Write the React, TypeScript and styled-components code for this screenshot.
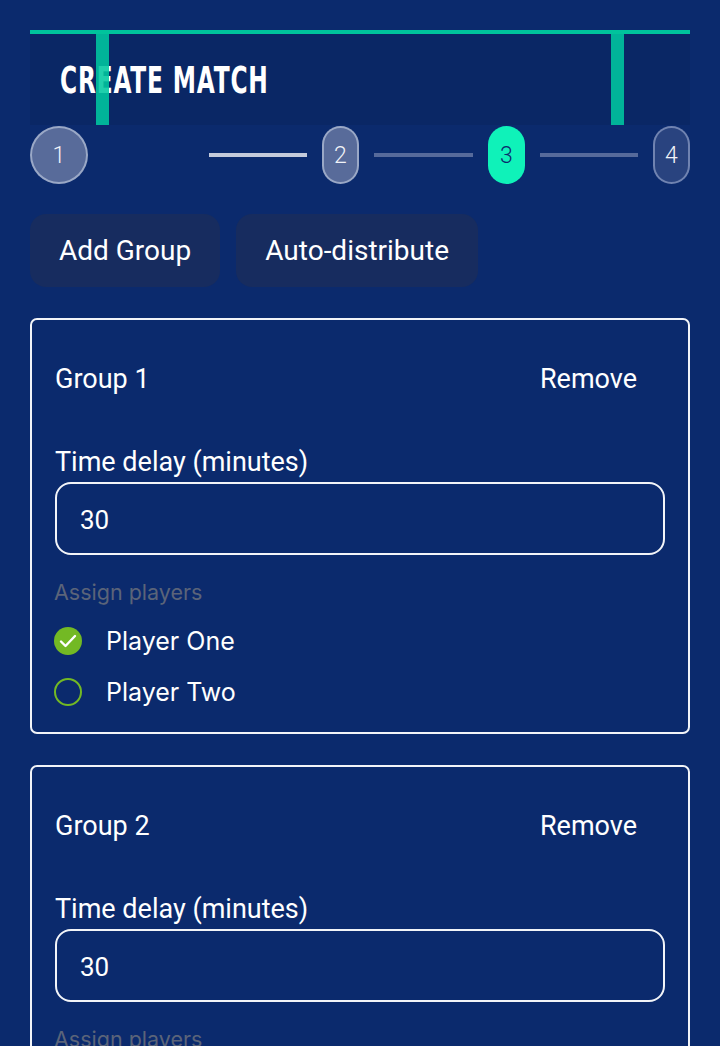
import React from "react";
import styled, { createGlobalStyle } from "styled-components";

const Global = createGlobalStyle`
  html, body { margin: 0; padding: 0; background: #0b2a6d; }
  body { font-family: Roboto, "Noto Sans", sans-serif; color: #fff; }
  * { box-sizing: border-box; }
`;

const Page = styled.div`
  padding: 30px 30px 0;
  min-height: 1046px;
  display: flex;
  flex-direction: column;
`;

const Header = styled.div`
  position: relative;
  height: 95px;
  background: #0a2765;
  border-top: 4px solid #00c39c;
  display: flex;
  align-items: center;
  padding-left: 30px;
`;

const Title = styled.h1`
  margin: 0;
  font-family: "DejaVu Sans Condensed", "DejaVu Sans", sans-serif;
  font-weight: 700;
  font-size: 37px;
  letter-spacing: 1.2px;
  color: #fff;
  white-space: nowrap;
  transform: scaleX(0.7);
  transform-origin: left center;
  padding-top: 2px;
`;

const Bar = styled.div<{ $left: number }>`
  position: absolute;
  top: 0;
  bottom: 0;
  left: ${(p) => p.$left}px;
  width: 13px;
  background: rgba(0, 200, 160, 0.88);
`;

const Stepper = styled.div`
  display: flex;
  align-items: center;
  height: 58px;
  margin-top: 1px;
`;

const FirstSlot = styled.div`
  width: 180px;
  display: flex;
  align-items: center;
`;

type Kind = "done" | "active" | "todo";

const Step = styled.div<{ $kind: Kind; $round?: boolean }>`
  width: ${(p) => (p.$round ? 58 : 37)}px;
  height: 58px;
  border-radius: 29px;
  flex: none;
  display: flex;
  align-items: center;
  justify-content: center;
  font-family: Roboto, sans-serif;
  font-weight: 300;
  font-size: 23px;
  background: ${(p) =>
    p.$kind === "active" ? "#0ff2b9" : p.$kind === "done" ? "#586b9a" : "#29437f"};
  border: ${(p) =>
    p.$kind === "active"
      ? "none"
      : p.$kind === "done"
      ? "2px solid rgba(210,218,235,0.55)"
      : "2px solid rgba(160,175,210,0.6)"};
  color: ${(p) => (p.$kind === "active" ? "#0b2a6d" : "#f1f3f8")};
`;

const Line = styled.div<{ $bright?: boolean; $w: number }>`
  width: ${(p) => p.$w}px;
  height: 4px;
  flex: none;
  background: ${(p) => (p.$bright ? "#c4cbdc" : "#566a9b")};
  margin: 0 15px;
`;

const FirstLine = styled(Line)`
  margin-left: 0;
`;

const Actions = styled.div`
  display: flex;
  gap: 16px;
  margin-top: 30px;
`;

const ActionButton = styled.button`
  height: 73px;
  padding: 0 29px;
  border: none;
  border-radius: 16px;
  background: #172c5f;
  color: #fff;
  font-family: Roboto, sans-serif;
  font-size: 28px;
  font-weight: 400;
`;

const Card = styled.div`
  margin-top: 31px;
  border: 2px solid #f2f4f8;
  border-radius: 7px;
  padding: 24px 23px 20px 22px;
  display: flex;
  flex-direction: column;
`;

const CardHead = styled.div`
  height: 70px;
  display: flex;
  align-items: center;
  justify-content: space-between;
  padding-left: 1px;
`;

const GroupName = styled.div`
  font-family: Roboto, sans-serif;
  font-size: 27px;
`;

const RemoveButton = styled.button`
  background: none;
  border: none;
  color: #fff;
  font-family: Roboto, sans-serif;
  font-size: 27px;
  padding: 0 28px 0 0;
`;

const FieldLabel = styled.label`
  margin-top: 32px;
  line-height: 32px;
  padding-left: 1px;
  font-family: Roboto, sans-serif;
  font-size: 27px;
`;

const Input = styled.input`
  margin-top: 4px;
  margin-left: 1px;
  height: 73px;
  width: calc(100% - 1px);
  border: 2px solid #f2f4f8;
  border-radius: 16px;
  background: transparent;
  color: #fff;
  font-family: Roboto, sans-serif;
  font-size: 26px;
  padding: 2px 0 0 23px;
  outline: none;
`;

const AssignLabel = styled.div`
  margin-top: 23px;
  line-height: 28px;
  font-family: Inter, sans-serif;
  font-size: 21.5px;
  color: #5b6479;
`;

const PlayerList = styled.div`
  margin-top: 15px;
  display: flex;
  flex-direction: column;
  gap: 11px;
`;

const PlayerRow = styled.div`
  height: 40px;
  display: flex;
  align-items: center;
  gap: 24px;
`;

const Check = styled.div<{ $on: boolean }>`
  width: 28px;
  height: 28px;
  border-radius: 50%;
  flex: none;
  display: flex;
  align-items: center;
  justify-content: center;
  background: ${(p) => (p.$on ? "#73b924" : "transparent")};
  border: ${(p) => (p.$on ? "none" : "2px solid #73b924")};
`;

const PlayerName = styled.span`
  font-family: Inter, sans-serif;
  font-size: 25px;
  color: #fff;
`;

const players = ["Player One", "Player Two"];

function GroupCard({ n, selected }: { n: number; selected: string[] }) {
  return (
    <Card>
      <CardHead>
        <GroupName>Group {n}</GroupName>
        <RemoveButton>Remove</RemoveButton>
      </CardHead>
      <FieldLabel>Time delay (minutes)</FieldLabel>
      <Input defaultValue="30" />
      <AssignLabel>Assign players</AssignLabel>
      <PlayerList>
        {players.map((p) => {
          const on = selected.includes(p);
          return (
            <PlayerRow key={p}>
              <Check $on={on}>
                {on && (
                  <svg width="18" height="14" viewBox="0 0 18 14">
                    <path d="M2 7.5 L6.5 12 L16 2" fill="none" stroke="#fff" strokeWidth="2.4" strokeLinecap="round" strokeLinejoin="round" />
                  </svg>
                )}
              </Check>
              <PlayerName>{p}</PlayerName>
            </PlayerRow>
          );
        })}
      </PlayerList>
    </Card>
  );
}

export default function App() {
  return (
    <>
      <Global />
      <Page>
        <Header>
          <Title>CREATE MATCH</Title>
          <Bar $left={66} />
          <Bar $left={581} />
        </Header>
        <Stepper>
          <FirstSlot>
            <Step $kind="done" $round>1</Step>
          </FirstSlot>
          <FirstLine $bright $w={98} />
          <Step $kind="done">2</Step>
          <Line $w={99} />
          <Step $kind="active">3</Step>
          <Line $w={98} />
          <Step $kind="todo">4</Step>
        </Stepper>
        <Actions>
          <ActionButton>Add Group</ActionButton>
          <ActionButton>Auto-distribute</ActionButton>
        </Actions>
        <GroupCard n={1} selected={["Player One"]} />
        <GroupCard n={2} selected={[]} />
      </Page>
    </>
  );
}
